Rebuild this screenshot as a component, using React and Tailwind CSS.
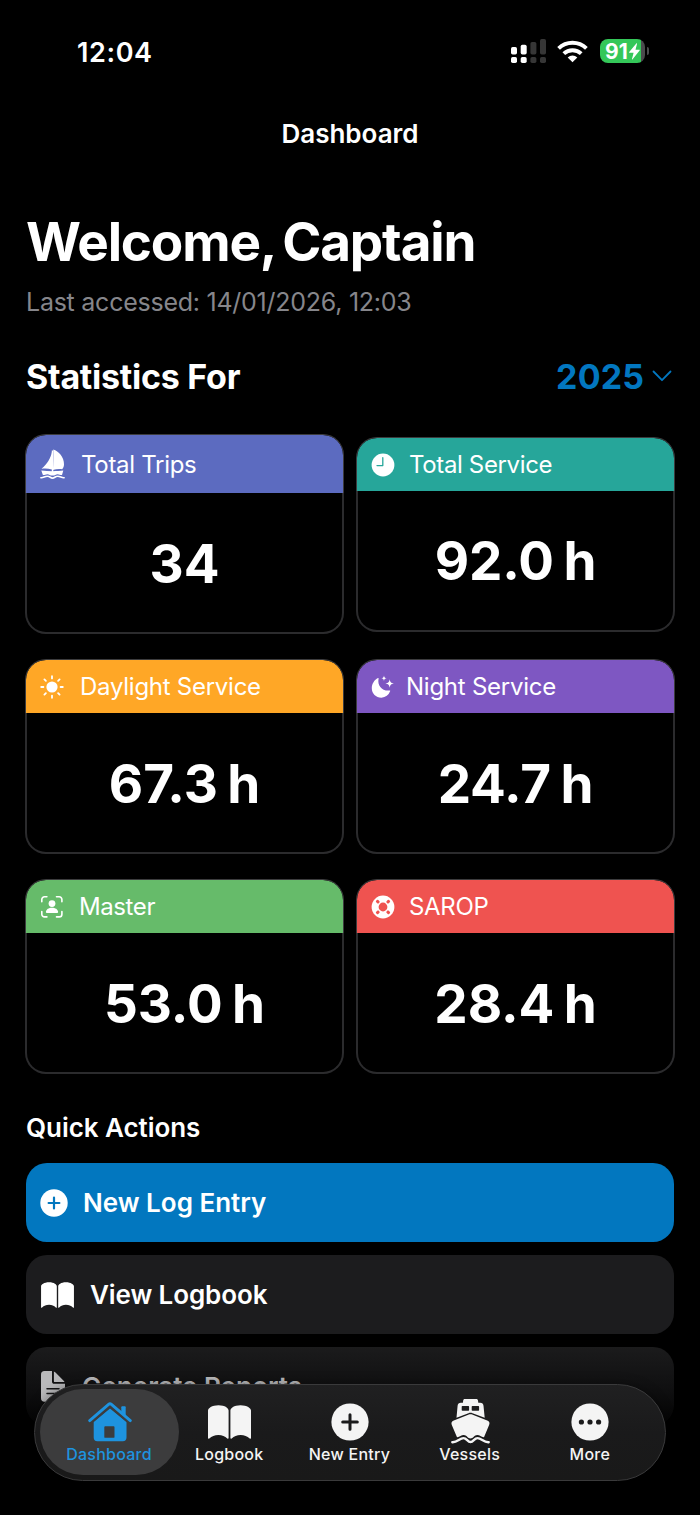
import React, { useState } from 'react';

const SailboatIcon = () => (
  <svg width="25" height="31" viewBox="0 0 25 31" fill="currentColor">
    <path d="M13.3 .4C18.5 2 24.3 8 24 15.5c-.1 2-.8 3.6-1.8 4.7-3-.4-6-.3-9.3.7.5-6 .7-13.5.4-20.5Z" />
    <path d="M12 2.8c-1.4 6.7-4.7 12.4-10.5 17 3.4-.5 6.9-.3 10.5.7Z" />
    <path d="M11.8 1.5h1.5v22h-1.5Z" />
    <path d="M1.3 21.6c7 .8 15.7.8 22 0l-1.3 4.5c-1.9.1-2.7-.9-4.4-.9s-2.6 1.4-5.1 1.4-3.4-1.4-5.1-1.4-2.7 1-4.5.9Z" />
    <path
      d="M.9 28.7c2.4.4 3.7-1.5 6.5-1.5s2.9 1.9 5.1 1.9 2.5-1.9 5.2-1.9 4 1.9 6.4 1.5"
      fill="none"
      stroke="currentColor"
      strokeWidth="1.6"
      strokeLinecap="round"
    />
  </svg>
);

const ClockIcon = () => (
  <svg width="24" height="24" viewBox="0 0 24 24">
    <circle cx="12" cy="12" r="11.4" fill="currentColor" />
    <path d="M11.8 4.7v7.9H6" fill="none" stroke="#26a69a" strokeWidth="1.3" strokeLinecap="round" strokeLinejoin="round" />
  </svg>
);

const SunIcon = () => (
  <svg width="24" height="24" viewBox="0 0 24 24" fill="none" stroke="currentColor" strokeWidth="1.8" strokeLinecap="round">
    <circle cx="12" cy="12" r="5.6" fill="currentColor" stroke="none" />
    <path d="M12 1.2v2.2M12 20.6v2.2M1.2 12h2.2M20.6 12h2.2M4.4 4.4l1.5 1.5M18.1 18.1l1.5 1.5M4.4 19.6l1.5-1.5M18.1 5.9l1.5-1.5" />
  </svg>
);

const MoonIcon = () => (
  <svg width="24" height="24" viewBox="0 0 24 24" fill="currentColor">
    <path d="M7.6 3.4c-1.5 7 3.4 12.9 11.1 12.1.5 0 .7.3.4.8A10 10 0 0 1 10.4 22.7C4.9 22.7.8 18.5.8 13.3.8 8.8 3.4 4.8 7 3c.4-.2.7 0 .6.4Z" />
    <path d="M18.7 4.2c.5 3 1.2 3.7 4.2 4.3-3 .5-3.7 1.3-4.2 4.3-.5-3-1.3-3.8-4.3-4.3 3-.6 3.8-1.3 4.3-4.3Z" />
    <path d="M13 .6c.3 1.9.8 2.4 2.7 2.7-1.9.4-2.4.8-2.7 2.7-.4-1.9-.8-2.3-2.7-2.7C12.2 3 12.6 2.5 13 .6Z" />
  </svg>
);

const MasterIcon = () => (
  <svg width="24" height="24" viewBox="0 0 24 24" fill="none" stroke="currentColor" strokeWidth="1.6" strokeLinecap="round">
    <path d="M1.8 6.7V4.5A2.7 2.7 0 0 1 4.5 1.8h2.4M16.5 1.8h2.7a2.7 2.7 0 0 1 2.7 2.7v2.2M1.8 16.5v2.7a2.7 2.7 0 0 0 2.7 2.7h2.4M16.5 21.9h2.7a2.7 2.7 0 0 0 2.7-2.7v-2.7" />
    <circle cx="12" cy="8.6" r="3.4" fill="currentColor" stroke="none" />
    <path d="M5.9 16.9c.2-2.6 2.9-4.2 6.1-4.2s5.9 1.6 6.1 4.2c0 .7-.3 1-.9 1H6.8c-.6 0-.9-.3-.9-1Z" fill="currentColor" stroke="none" />
  </svg>
);

const LifebuoyIcon = () => (
  <svg width="24" height="24" viewBox="0 0 24 24">
    <circle cx="12" cy="12" r="11.4" fill="currentColor" />
    <g fill="#ef5350">
      <circle cx="12" cy="12" r="4.4" />
      <rect x="5" y="5.2" width="3.6" height="3" rx="1" transform="rotate(45 6.8 6.7)" />
      <rect x="15.4" y="5.2" width="3.6" height="3" rx="1" transform="rotate(-45 17.2 6.7)" />
      <rect x="5" y="15.8" width="3.6" height="3" rx="1" transform="rotate(-45 6.8 17.3)" />
      <rect x="15.4" y="15.8" width="3.6" height="3" rx="1" transform="rotate(45 17.2 17.3)" />
    </g>
  </svg>
);

const BookIcon = ({ className }) => (
  <svg viewBox="0 0 43 34" fill="currentColor" className={className}>
    <path d="M0 5.5C0 3.5 3.8.3 10.5.3S20.6 3.5 20.6 5.5V33c0 .7-.7.9-1.3.4C17 31.2 14.2 29.9 10.4 29.9s-6.6 1.3-9.1 3.5c-.6.5-1.3.3-1.3-.4Z" />
    <path d="M22.4 5.5c0-2 3.5-5.2 10.1-5.2S43 3.5 43 5.5V33c0 .7-.7.9-1.3.4-2.5-2.2-5.3-3.5-9.1-3.5s-6.6 1.3-8.9 3.5c-.6.5-1.3.3-1.3-.4Z" />
  </svg>
);

const PlusCircleIcon = ({ className, plus }) => (
  <svg viewBox="0 0 38 38" className={className}>
    <circle cx="19" cy="19" r="18.6" fill="currentColor" />
    <path d="M19 11.7v14.6M11.7 19h14.6" stroke={plus} strokeWidth="3" strokeLinecap="round" />
  </svg>
);

const DocumentIcon = () => (
  <svg width="24" height="31" viewBox="0 0 24 31" fill="currentColor">
    <path d="M3.5 0H11v10.5c0 1.5.8 2.3 2.3 2.3H24V27c0 2.5-1.2 3.7-3.6 3.7H3.6C1.2 30.7 0 29.5 0 27V3.7C0 1.3 1.2 0 3.5 0Z" />
    <path d="M12.9.4c.6.2 1.1.6 1.6 1.1l7.9 8c.5.5.9 1 1.1 1.6h-9.7c-.6 0-.9-.3-.9-.9Z" />
    <path d="M6 17.8h12M6 22.5h12" stroke="#151516" strokeWidth="1.5" strokeLinecap="round" />
  </svg>
);

const HouseIcon = () => (
  <svg width="44" height="40" viewBox="0 0 44 40">
    <path
      d="M22 6.5 38.5 20v15.5c0 2.3-1.3 3.7-3.6 3.7H9.3c-2.3 0-3.6-1.4-3.6-3.7V20ZM17.2 24.3c-.6 0-.9.3-.9.9v9.7c0 .6.3.9.9.9h8.4c.6 0 .9-.3.9-.9v-9.7c0-.6-.3-.9-.9-.9Z"
      fill="currentColor"
      fillRule="evenodd"
    />
    <path d="M1.7 18.6 20.6 2.4c.9-.8 1.9-.8 2.8 0l18.9 16.2" fill="none" stroke="#3c3c3d" strokeWidth="5.4" transform="translate(0 1)" />
    <path d="M33.3 10V5.3c0-.7.4-1.1 1.1-1.1h2.2c.7 0 1.1.4 1.1 1.1V14Z" fill="currentColor" />
    <path d="M1.7 18.6 20.6 2.4c.9-.8 1.9-.8 2.8 0l18.9 16.2" fill="none" stroke="currentColor" strokeWidth="2.9" strokeLinecap="round" />
  </svg>
);

const FerryIcon = () => (
  <svg width="39" height="45" viewBox="0 0 39 45" fill="currentColor">
    <path
      d="M13.7 0h11.6c1 0 1.6.6 1.7 1.6l.3 2.2h1.9c2 0 3.1 1 3.3 3l1.2 12-12.2-4.6c-1.4-.5-2.7-.5-4 0L5.500 18.8l1.1-12c.2-2 1.3-3 3.3-3h2l.3-2.2c.1-1 .6-1.6 1.5-1.6ZM11.4 7c-.5 0-.7.3-.7.7V11c0 .5.2.7.7.7h6c.5 0 .7-.2.7-.7V7.7c0-.4-.2-.7-.7-.7Zm10 0c-.5 0-.7.3-.7.7V11c0 .5.2.7.7.7h6c.5 0 .7-.2.7-.7V7.7c0-.4-.2-.7-.7-.7Z"
      fillRule="evenodd"
    />
    <path d="M18.5 15.3c.7-.2 1.3-.2 2 0l15.7 6.2c2.2.9 2.8 2.4 1.9 4.5L33 38.3c-2.7.2-4.1-2.2-6.8-2.2s-4.1 3.5-6.700 3.500-4-3.500-6.700-3.500-4.100 2.400-6.800 2.200L.8 26c-.8-2.1-.2-3.6 2-4.5Z" />
    <path
      d="M1.3 43.2c5.100.4 7.200-4.100 11.200-4.100 3.300 0 4 3.900 7 3.900s3.700-3.900 7-3.900c4 0 6.100 4.500 11.200 4.100"
      fill="none"
      stroke="currentColor"
      strokeWidth="2.4"
      strokeLinecap="round"
    />
  </svg>
);

const MoreIcon = () => (
  <svg width="38" height="38" viewBox="0 0 38 38">
    <circle cx="19" cy="19" r="18.6" fill="currentColor" />
    <g fill="#1b1b1c">
      <circle cx="10.4" cy="19" r="2.6" />
      <circle cx="19" cy="19" r="2.6" />
      <circle cx="27.6" cy="19" r="2.6" />
    </g>
  </svg>
);

const StatusBar = () => (
  <div className="flex h-[104px] items-center justify-between pl-[77px] pr-[51px]">
    <span className="mt-[2px] text-[27px] font-semibold tracking-[0.6px]">12:04</span>
    <div className="-mt-[2px] flex items-center">
      <svg width="36" height="24" viewBox="0 0 36 24" className="mr-[10px]">
        <g fill="#fff">
          <rect x="0" y="8" width="6" height="7.5" rx="1.7" />
          <rect x="9.7" y="5.7" width="6" height="9.8" rx="1.7" />
          <rect x="0" y="18" width="6" height="6" rx="1.7" />
          <rect x="9.7" y="18" width="6" height="6" rx="1.7" />
        </g>
        <g fill="#363636">
          <rect x="19.4" y="3" width="6" height="12.5" rx="1.7" />
          <rect x="29" y="0" width="6" height="15.5" rx="1.7" />
          <rect x="19.4" y="18" width="6" height="6" rx="1.7" />
          <rect x="29" y="18" width="6" height="6" rx="1.7" />
        </g>
      </svg>
      <svg width="31" height="23" viewBox="0 0 31 23" fill="none" stroke="#fff" strokeWidth="3.9" className="mr-[12px]">
        <path d="M1.6 8.3a20 20 0 0 1 27.8 0" />
        <path d="M6.8 13.7a12.7 12.7 0 0 1 17.4 0" />
        <path d="m15.5 22.3-4.8-4.9a7 7 0 0 1 9.6 0Z" fill="#fff" stroke="none" />
      </svg>
      <div className="flex items-center">
        <div className="flex h-6 w-[45px] items-center rounded-[8px] bg-[linear-gradient(90deg,#34c759_0_41px,#4b4b4d_41px)] pl-[5px]">
          <span className="text-[21px] leading-none font-bold tracking-[0.1px]">91</span>
          <svg width="11" height="17" viewBox="0 0 11 16" className="ml-[1px] shrink-0" fill="#fff">
            <path d="M7.3 0 .2 8.6c-.3.4 0 .7.3.7h4.1L3 15.5c-.1.5.3.6.6.3l7-8.8c.3-.3.1-.7-.3-.7H6.5L8 .4c.1-.5-.4-.7-.7-.4Z" />
          </svg>
        </div>
        <div className="ml-[2px] h-2 w-[2px] rounded-r-full bg-[#4b4b4d]" />
      </div>
    </div>
  </div>
);

const stats = [
  { label: 'Total Trips', value: '34', icon: SailboatIcon, header: 'h-[59px] pt-px bg-[#5c6bc0]', labelClass: 'ml-[16px] tracking-[-0.3px]' },
  { label: 'Total Service', value: '92.0 h', icon: ClockIcon, header: 'h-[54px] pt-px bg-[#26a69a]', labelClass: 'ml-[14px] tracking-[-0.36px]' },
  { label: 'Daylight Service', value: '67.3 h', icon: SunIcon, header: 'h-[54px] bg-[#ffa726]', labelClass: 'ml-[16px] tracking-[-0.26px]' },
  { label: 'Night Service', value: '24.7 h', icon: MoonIcon, header: 'h-[54px] bg-[#7e57c2]', labelClass: 'ml-[11px] tracking-[-0.25px]' },
  { label: 'Master', value: '53.0 h', icon: MasterIcon, header: 'h-[54px] bg-[#66bb6a]', labelClass: 'ml-[15px] tracking-[-0.4px]' },
  { label: 'SAROP', value: '28.4 h', icon: LifebuoyIcon, header: 'h-[54px] bg-[#ef5350]', labelClass: 'ml-[14px] tracking-[-0.3px]' },
];

const StatCard = ({ stat }) => {
  const Icon = stat.icon;

  return (
    <div>
      <div className={`flex items-center rounded-t-[21px] border-x border-t border-[#3c3c3e] bg-clip-padding pl-[14px] ${stat.header}`}>
        <Icon />
        <span className={`text-[24px] leading-none ${stat.labelClass}`}>{stat.label}</span>
      </div>
      <div className="flex h-[141px] items-center justify-center rounded-b-[21px] border-x-2 border-b-2 border-[#2b2b2d] pt-[3px]">
        <span className="text-[53px] leading-none font-bold whitespace-nowrap tracking-[-0.1px] [word-spacing:-3px]">{stat.value}</span>
      </div>
    </div>
  );
};

const tabs = [
  { label: 'Dashboard', icon: HouseIcon },
  { label: 'Logbook', icon: () => <BookIcon className="h-[34px] w-[43px]" /> },
  { label: 'New Entry', icon: () => <PlusCircleIcon className="size-[38px]" plus="#1b1b1c" /> },
  { label: 'Vessels', icon: FerryIcon },
  { label: 'More', icon: MoreIcon },
];

const TabBar = () => {
  const [active, setActive] = useState('Dashboard');

  return (
    <nav className="absolute top-[1384px] left-[34px] flex h-[97px] w-[632px] items-start rounded-full border border-[#3a3a3b] bg-[linear-gradient(180deg,#202021,#1a1a1b_50%,#191919)] pt-[4px] pl-[5px] shadow-[0_0_12px_rgba(0,0,0,0.35)]">
      {tabs.map(({ label, icon: Icon }) => (
        <button
          key={label}
          onClick={() => setActive(label)}
          className={`mr-[-18.8px] flex h-[86px] w-[139px] shrink-0 flex-col items-center rounded-[43px] ${
            active === label ? 'bg-[#3c3c3d] text-[#1e93df]' : 'text-[#f4f4f4]'
          }`}
        >
          <span className="mt-[10px] flex h-[45px] items-center justify-center">
            <Icon />
          </span>
          <span className="mt-px -ml-px text-[16px] leading-[18px] font-medium tracking-[0.25px] whitespace-nowrap">{label}</span>
        </button>
      ))}
    </nav>
  );
};

const App = () => {
  return (
    <div className="relative h-[1515px] w-[700px] overflow-hidden bg-black font-['Inter','Liberation_Sans',sans-serif] text-white">
      <StatusBar />

      <header className="flex h-[60px] items-center justify-center">
        <h1 className="text-[26px] leading-none font-semibold">Dashboard</h1>
      </header>

      <main className="px-[25px]">
        <h2 className="mt-[48px] pl-px text-[53px] leading-[60px] font-bold tracking-[-1.15px] [word-spacing:-4px]">Welcome, Captain</h2>
        <p className="mt-[15px] pl-px text-[25px] leading-[30px] tracking-[-0.25px] text-[#86868b]">Last accessed: 14/01/2026, 12:03</p>

        {/* Year picker */}
        <div className="mt-[39px] flex h-10 items-center justify-between pl-px pr-[3px]">
          <h3 className="text-[34px] font-bold tracking-[-0.25px]">Statistics For</h3>
          <button className="flex items-center text-[#0277c0]">
            <span className="text-[34px] font-bold tracking-[0.1px]">2025</span>
            <svg width="20" height="12" viewBox="0 0 20 12" fill="none" stroke="currentColor" strokeWidth="1.8" strokeLinecap="round" strokeLinejoin="round" className="ml-[8px]">
              <path d="m1.5 1.5 8.500 8.7 8.500-8.7" />
            </svg>
          </button>
        </div>

        {/* Statistics */}
        <div className="mt-[38px] grid grid-cols-2 items-center gap-x-[12px] gap-y-[25px]">
          {stats.map((stat) => (
            <StatCard key={stat.label} stat={stat} />
          ))}
        </div>

        {/* Quick Actions */}
        <h4 className="mt-[38px] pl-px text-[26px] leading-[32px] font-semibold tracking-[-0.05px]">Quick Actions</h4>
        <div className="mt-[19px] flex flex-col gap-[13px] px-px text-[26px] font-semibold">
          <button className="flex h-[79px] items-center rounded-[21px] bg-[#0277bf] pl-[14px]">
            <PlusCircleIcon className="size-7" plus="#0277bf" />
            <span className="ml-[15px]">New Log Entry</span>
          </button>
          <button className="flex h-[79px] items-center rounded-[21px] bg-[#1c1c1e] pl-[15px]">
            <BookIcon className="h-[26px] w-[33px]" />
            <span className="ml-[16px] tracking-[-0.1px]">View Logbook</span>
          </button>
          <button className="flex h-[79px] items-center rounded-[21px] bg-[linear-gradient(180deg,#1b1b1c,#0f0f10_55%,#030303)] pl-[15px] text-[#b9b9bb]">
            <DocumentIcon />
            <span className="ml-[17px]">Generate Reports</span>
          </button>
        </div>
      </main>

      <TabBar />
    </div>
  );
};

export default App;
